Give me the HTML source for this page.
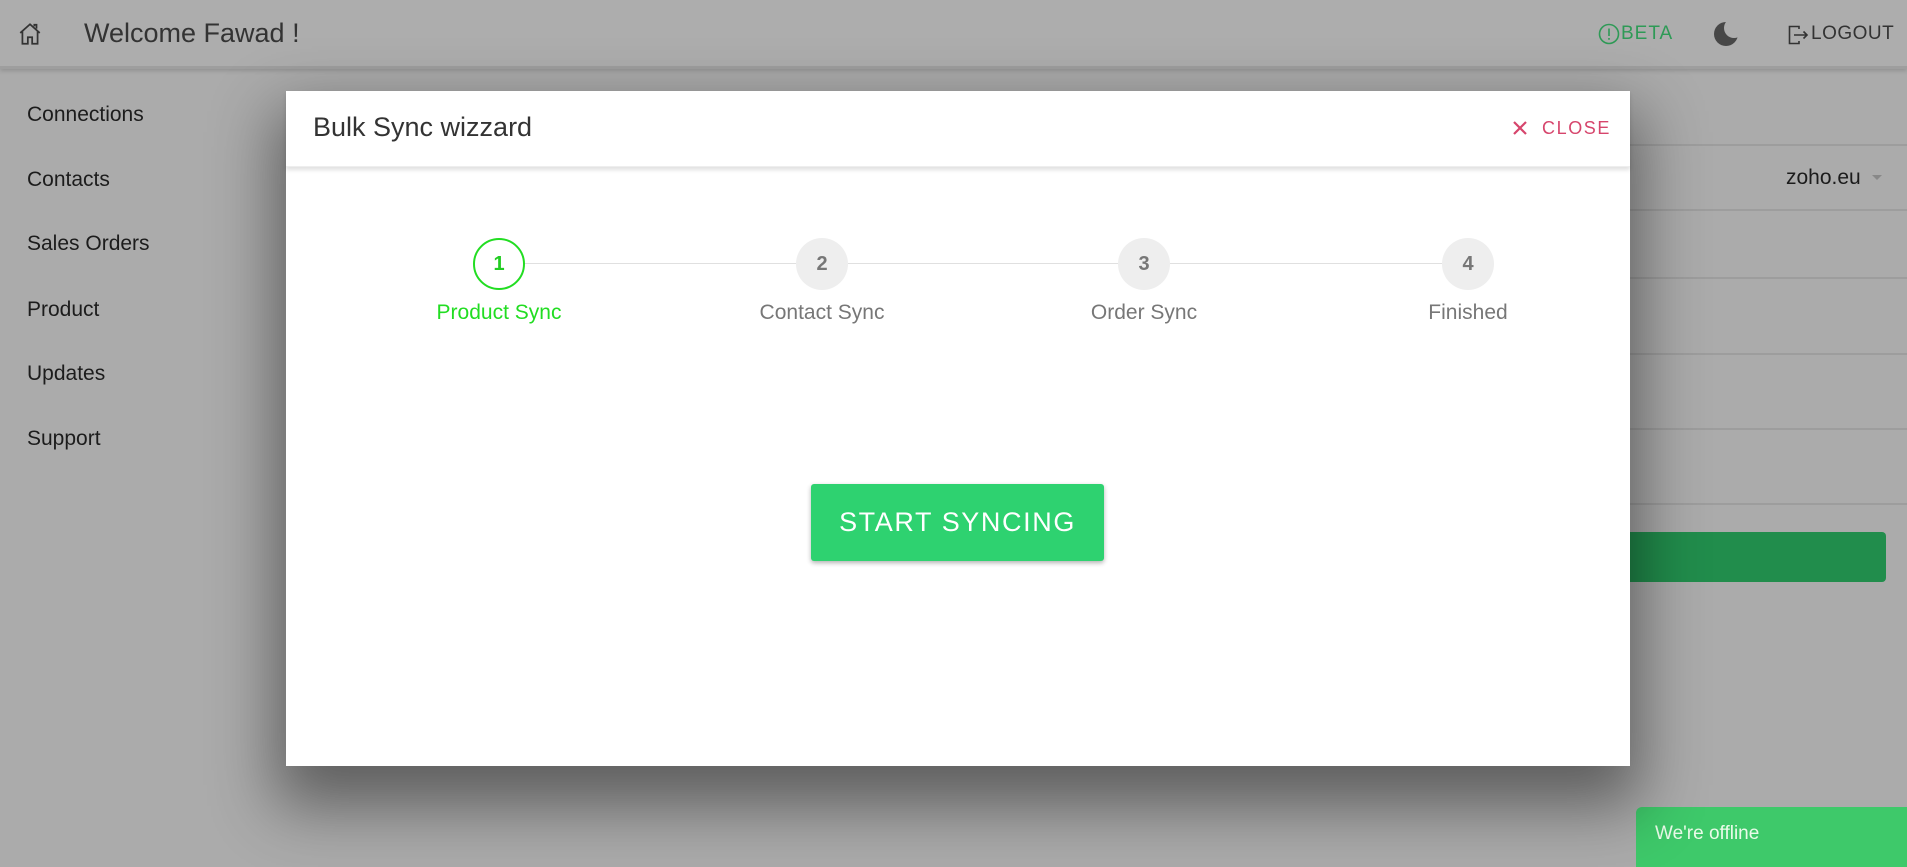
<!DOCTYPE html>
<html><head><meta charset="utf-8"><style>
*{margin:0;padding:0;box-sizing:border-box}
body{width:1907px;height:861px;overflow:hidden;background:#ababab;font-family:"Liberation Sans",Arial,sans-serif;position:relative}
.abs{position:absolute}
.hdr{left:0;top:0;width:1907px;height:69px;background:#adadad;border-bottom:3px solid #9e9e9e;box-shadow:0 2px 4px rgba(0,0,0,.15)}
.side{left:27px;font-size:21px;color:#1c1c1c}
.line{left:1630px;width:277px;height:2px;background:#9d9d9d}
.modal{left:286px;top:91px;width:1344px;height:675px;background:#fff;box-shadow:0 30px 60px 10px rgba(0,0,0,.45)}
.mh{left:0;top:0;width:1344px;height:76px;border-bottom:1px solid #eee;box-shadow:0 3px 4px rgba(0,0,0,.12)}
.circ{width:52px;height:52px;border-radius:50%;background:#eee;color:#777;font-weight:bold;font-size:20px;text-align:center;line-height:52px;top:238px}
.lbl{top:300px;font-size:21px;color:#777;width:240px;text-align:center}
</style></head><body>
<div class="abs hdr"></div>
<svg class="abs" style="left:17px;top:21px" width="26" height="26" viewBox="0 0 24 24" fill="none" stroke="#333" stroke-width="1.6"><path d="M3 11 L12 3 L21 11 M5 9.5 V21 H10 V15 H14 V21 H19 V9.5"/><path d="M16 5 V3.5 H18 V7"/></svg>
<div class="abs" style="left:84px;top:18px;font-size:27px;color:#333">Welcome Fawad !</div>
<svg class="abs" style="left:1598px;top:23px" width="22" height="22" viewBox="0 0 22 22" fill="none" stroke="#2e9a56" stroke-width="1.6"><circle cx="11" cy="11" r="9.5"/><path d="M11 5.5V13M11 15v1.8"/></svg>
<div class="abs" style="left:1621px;top:23px;font-size:19px;color:#2e9a56;letter-spacing:1px">BETA</div>
<svg class="abs" style="left:1712px;top:19px" width="30" height="30" viewBox="0 0 30 30"><defs><mask id="m"><rect width="30" height="30" fill="#fff"/><circle cx="22" cy="9" r="10" fill="#000"/></mask></defs><circle cx="14" cy="15" r="12" fill="#474747" mask="url(#m)"/></svg>
<svg class="abs" style="left:1788px;top:25px" width="22" height="20" viewBox="0 0 22 20" fill="none" stroke="#333" stroke-width="1.6"><path d="M11 4V1.5H1.5v17H11V16M6 10h13M15.5 6.5 19 10l-3.5 3.5"/></svg>
<div class="abs" style="left:1811px;top:23px;font-size:19px;color:#333;letter-spacing:.5px">LOGOUT</div>

<div class="abs side" style="top:103px">Connections</div>
<div class="abs side" style="top:168px">Contacts</div>
<div class="abs side" style="top:232px">Sales Orders</div>
<div class="abs side" style="top:298px">Product</div>
<div class="abs side" style="top:362px">Updates</div>
<div class="abs side" style="top:427px">Support</div>

<div class="abs line" style="top:144px"></div>
<div class="abs" style="left:1786px;top:166px;font-size:21px;color:#1c1c1c">zoho.eu</div>
<div class="abs" style="left:1872px;top:175px;border:5px solid transparent;border-top:5px solid #888"></div>
<div class="abs line" style="top:209px"></div>
<div class="abs line" style="top:277px"></div>
<div class="abs line" style="top:353px"></div>
<div class="abs line" style="top:428px"></div>
<div class="abs line" style="top:503px"></div>
<div class="abs" style="left:1600px;top:532px;width:286px;height:50px;background:#218d4c;border-radius:4px"></div>
<div class="abs" style="left:1636px;top:807px;width:271px;height:60px;background:#3ec96a;border-radius:6px 0 0 0;color:#eafbe9;font-size:19px;padding:16px 19px">We're offline</div>

<div class="abs modal">
 <div class="abs mh"></div>
 <div class="abs" style="left:27px;top:21px;font-size:27px;color:#333">Bulk Sync wizzard</div>
 <svg class="abs" style="left:1226px;top:29px" width="16" height="16" viewBox="0 0 16 16" stroke="#d6456c" stroke-width="2.2"><path d="M2 2L14 14M14 2L2 14"/></svg>
 <div class="abs" style="left:1256px;top:27px;font-size:18px;color:#d6456c;letter-spacing:1.6px">CLOSE</div>
 <div class="abs" style="left:213px;top:172px;width:969px;height:1px;background:#e0e0e0"></div>
 <div class="abs circ" style="left:187px;top:147px;background:#fff;border:2px solid #22dd22;color:#22cc22;line-height:48px">1</div>
 <div class="abs circ" style="left:510px;top:147px">2</div>
 <div class="abs circ" style="left:832px;top:147px">3</div>
 <div class="abs circ" style="left:1156px;top:147px">4</div>
 <div class="abs lbl" style="left:93px;top:210px;color:#22dd22">Product Sync</div>
 <div class="abs lbl" style="left:416px;top:210px">Contact Sync</div>
 <div class="abs lbl" style="left:738px;top:210px">Order Sync</div>
 <div class="abs lbl" style="left:1062px;top:210px">Finished</div>
 <div class="abs" style="left:525px;top:393px;width:293px;height:77px;background:#2ed270;border-radius:3px;box-shadow:0 2px 5px rgba(0,0,0,.3);color:#fff;font-size:27px;letter-spacing:1.6px;text-align:center;line-height:77px">START SYNCING</div>
</div>
</body></html>
